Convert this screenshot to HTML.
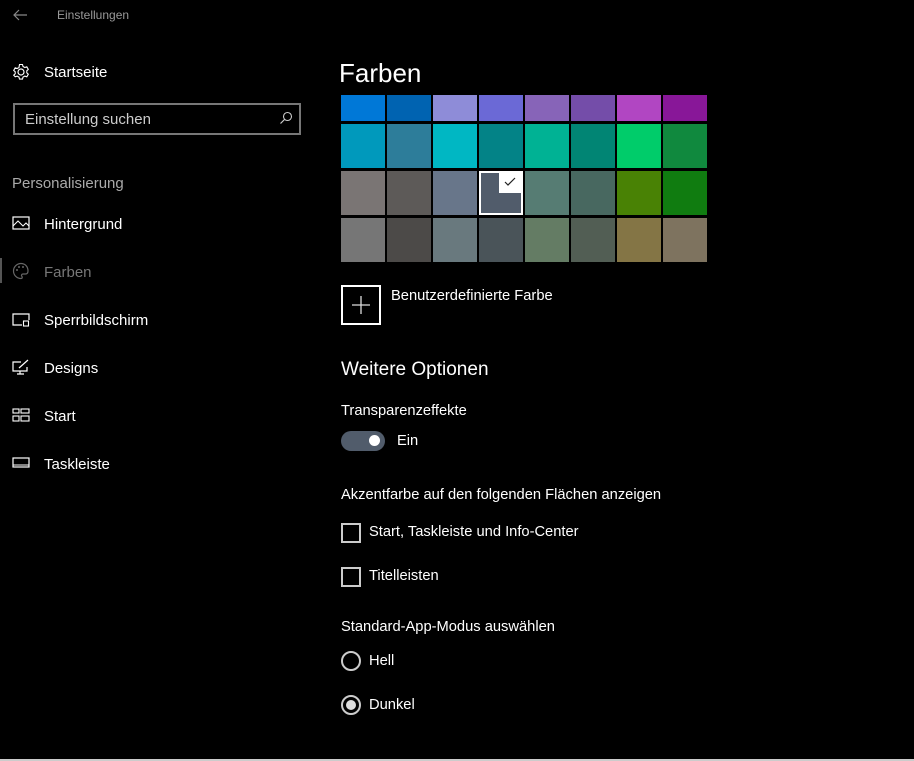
<!DOCTYPE html>
<html><head><meta charset="utf-8"><style>
*{margin:0;padding:0;box-sizing:border-box}
body{width:914px;height:761px;background:#000;color:#fff;font-family:"Liberation Sans",sans-serif;position:relative;overflow:hidden}
.a{position:absolute;white-space:nowrap}
.nav{font-size:15px;left:44px}
.ic{position:absolute;left:12px}
.sw{position:absolute;width:44px}
.t{font-size:14.7px}
</style></head><body>
<svg class="a" style="left:12px;top:8px" width="16" height="14" viewBox="0 0 16 14"><path d="M15 7H2M7 2L2 7l5 5" stroke="#888" fill="none" stroke-width="1.2"/></svg>
<div class="a" style="left:57px;top:8px;font-size:12px;color:#999">Einstellungen</div>

<svg class="ic" style="top:63px" width="18" height="18" viewBox="0 0 18 18"><circle cx="9" cy="9" r="3" stroke="#fff" fill="none" stroke-width="1.2"/><path d="M7.5 1.5h3l.5 2 1.8 1 2-.7 1.5 2.6-1.5 1.4v2l1.5 1.4-1.5 2.6-2-.7-1.8 1-.5 2h-3l-.5-2-1.8-1-2 .7L1.7 12.2l1.5-1.4v-2L1.7 7.4l1.5-2.6 2 .7 1.8-1z" stroke="#fff" fill="none" stroke-width="1.1"/></svg>
<div class="a nav" style="top:64px">Startseite</div>

<div class="a" style="left:13px;top:103px;width:288px;height:32px;border:2px solid #777"></div>
<div class="a" style="left:25px;top:111px;font-size:15px;color:#ccc">Einstellung suchen</div>
<svg class="a" style="left:279px;top:111px" width="14" height="14" viewBox="0 0 14 14"><circle cx="8.5" cy="5.5" r="4" stroke="#ccc" fill="none" stroke-width="1.1"/><path d="M5.5 8.5L1.5 12.5" stroke="#ccc" stroke-width="1.2"/></svg>

<div class="a" style="left:12px;top:175px;font-size:15px;color:#aaa">Personalisierung</div>

<svg class="ic" style="top:216px" width="18" height="14" viewBox="0 0 18 14"><rect x="1" y="1" width="16" height="12" stroke="#fff" fill="none" stroke-width="1.2"/><path d="M1 10l5-5 5 5 3-3 3 3" stroke="#fff" fill="none" stroke-width="1"/></svg>
<div class="a nav" style="top:216px">Hintergrund</div>

<div class="a" style="left:0;top:258px;width:2px;height:25px;background:#555"></div>
<svg class="ic" style="top:262px" width="18" height="18" viewBox="0 0 18 18"><path d="M9 1.5a7.5 7.5 0 1 0 0 15c1.5 0 1.5-1.5.8-2.3-.8-1 0-2.2 1.2-2.2h2.5c2 0 2.5-1.5 2.5-3C16 4.5 13 1.5 9 1.5z" stroke="#666" fill="none" stroke-width="1.2"/><circle cx="5" cy="8" r="1" fill="#666"/><circle cx="7" cy="5" r="1" fill="#666"/><circle cx="11" cy="5" r="1" fill="#666"/></svg>
<div class="a nav" style="top:264px;color:#777">Farben</div>

<svg class="ic" style="top:313px" width="18" height="14" viewBox="0 0 18 14"><path d="M10 12H1V1h16v6" stroke="#fff" fill="none" stroke-width="1.2"/><rect x="11.5" y="8" width="5" height="5" stroke="#fff" fill="none" stroke-width="1.1"/></svg>
<div class="a nav" style="top:312px">Sperrbildschirm</div>

<svg class="ic" style="top:359px" width="18" height="16" viewBox="0 0 18 16"><path d="M9 3H1v9h14V8M5 15h7M8 12v3M7 9l9-8" stroke="#fff" fill="none" stroke-width="1.2"/></svg>
<div class="a nav" style="top:360px">Designs</div>

<svg class="ic" style="top:408px" width="18" height="14" viewBox="0 0 18 14"><rect x="1" y="1" width="6" height="4" stroke="#fff" fill="none" stroke-width="1.1"/><rect x="9" y="1" width="8" height="4" stroke="#fff" fill="none" stroke-width="1.1"/><rect x="1" y="8" width="6" height="5" stroke="#fff" fill="none" stroke-width="1.1"/><rect x="9" y="8" width="8" height="5" stroke="#fff" fill="none" stroke-width="1.1"/></svg>
<div class="a nav" style="top:408px">Start</div>

<svg class="ic" style="top:457px" width="18" height="12" viewBox="0 0 18 12"><rect x="1" y="1" width="16" height="9" stroke="#fff" fill="none" stroke-width="1.2"/><path d="M1 8h16" stroke="#fff"/></svg>
<div class="a nav" style="top:456px">Taskleiste</div>

<div class="a" style="left:339px;top:58px;font-size:26px">Farben</div>

<div class="sw" style="left:341px;top:95px;height:26px;background:#0078d7"></div>
<div class="sw" style="left:387px;top:95px;height:26px;background:#0063b1"></div>
<div class="sw" style="left:433px;top:95px;height:26px;background:#8e8cd8"></div>
<div class="sw" style="left:479px;top:95px;height:26px;background:#6b69d6"></div>
<div class="sw" style="left:525px;top:95px;height:26px;background:#8764b8"></div>
<div class="sw" style="left:571px;top:95px;height:26px;background:#744da9"></div>
<div class="sw" style="left:617px;top:95px;height:26px;background:#b146c2"></div>
<div class="sw" style="left:663px;top:95px;height:26px;background:#881798"></div>

<div class="sw" style="left:341px;top:124px;height:44px;background:#0099bc"></div>
<div class="sw" style="left:387px;top:124px;height:44px;background:#2d7d9a"></div>
<div class="sw" style="left:433px;top:124px;height:44px;background:#00b7c3"></div>
<div class="sw" style="left:479px;top:124px;height:44px;background:#038387"></div>
<div class="sw" style="left:525px;top:124px;height:44px;background:#00b294"></div>
<div class="sw" style="left:571px;top:124px;height:44px;background:#018574"></div>
<div class="sw" style="left:617px;top:124px;height:44px;background:#00cc6a"></div>
<div class="sw" style="left:663px;top:124px;height:44px;background:#10893e"></div>

<div class="sw" style="left:341px;top:171px;height:44px;background:#7a7574"></div>
<div class="sw" style="left:387px;top:171px;height:44px;background:#5d5a58"></div>
<div class="sw" style="left:433px;top:171px;height:44px;background:#68768a"></div>
<div class="sw" style="left:479px;top:171px;height:44px;background:#515c6b;border:2px solid #fff"></div>
<div class="a" style="left:499px;top:173px;width:22px;height:20px;background:#fff"></div>
<svg class="a" style="left:502px;top:175px" width="16" height="14" viewBox="0 0 16 14"><path d="M3 7l3 3 7-7" stroke="#222" fill="none" stroke-width="1.2"/></svg>
<div class="sw" style="left:525px;top:171px;height:44px;background:#567c73"></div>
<div class="sw" style="left:571px;top:171px;height:44px;background:#486860"></div>
<div class="sw" style="left:617px;top:171px;height:44px;background:#498205"></div>
<div class="sw" style="left:663px;top:171px;height:44px;background:#107c10"></div>

<div class="sw" style="left:341px;top:218px;height:44px;background:#767676"></div>
<div class="sw" style="left:387px;top:218px;height:44px;background:#4c4a48"></div>
<div class="sw" style="left:433px;top:218px;height:44px;background:#69797e"></div>
<div class="sw" style="left:479px;top:218px;height:44px;background:#4a5459"></div>
<div class="sw" style="left:525px;top:218px;height:44px;background:#647c64"></div>
<div class="sw" style="left:571px;top:218px;height:44px;background:#525e54"></div>
<div class="sw" style="left:617px;top:218px;height:44px;background:#847545"></div>
<div class="sw" style="left:663px;top:218px;height:44px;background:#7e735f"></div>

<div class="a" style="left:341px;top:285px;width:40px;height:40px;border:2px solid #fff"></div>
<svg class="a" style="left:351px;top:295px" width="20" height="20" viewBox="0 0 20 20"><path d="M10 1v18M1 10h18" stroke="#ddd" stroke-width="1.3"/></svg>
<div class="a t" style="left:391px;top:288px">Benutzerdefinierte Farbe</div>

<div class="a" style="left:341px;top:359px;font-size:19px">Weitere Optionen</div>
<div class="a t" style="left:341px;top:403px">Transparenzeffekte</div>
<div class="a" style="left:341px;top:431px;width:44px;height:20px;border-radius:10px;background:#515c6b"></div>
<div class="a" style="left:369px;top:435px;width:11px;height:11px;border-radius:50%;background:#fff"></div>
<div class="a t" style="left:397px;top:433px">Ein</div>

<div class="a t" style="left:341px;top:487px">Akzentfarbe auf den folgenden Flächen anzeigen</div>
<div class="a" style="left:341px;top:523px;width:20px;height:20px;border:2px solid #ccc"></div>
<div class="a t" style="left:369px;top:524px">Start, Taskleiste und Info-Center</div>
<div class="a" style="left:341px;top:567px;width:20px;height:20px;border:2px solid #ccc"></div>
<div class="a t" style="left:369px;top:568px">Titelleisten</div>

<div class="a t" style="left:341px;top:619px">Standard-App-Modus auswählen</div>
<div class="a" style="left:341px;top:651px;width:20px;height:20px;border:2px solid #ccc;border-radius:50%"></div>
<div class="a t" style="left:369px;top:653px">Hell</div>
<div class="a" style="left:341px;top:695px;width:20px;height:20px;border:2px solid #ccc;border-radius:50%"></div>
<div class="a" style="left:346px;top:700px;width:10px;height:10px;border-radius:50%;background:#ddd"></div>
<div class="a t" style="left:369px;top:697px">Dunkel</div>

<div class="a" style="left:0;top:759px;width:914px;height:2px;background:#ccc"></div>
</body></html>
